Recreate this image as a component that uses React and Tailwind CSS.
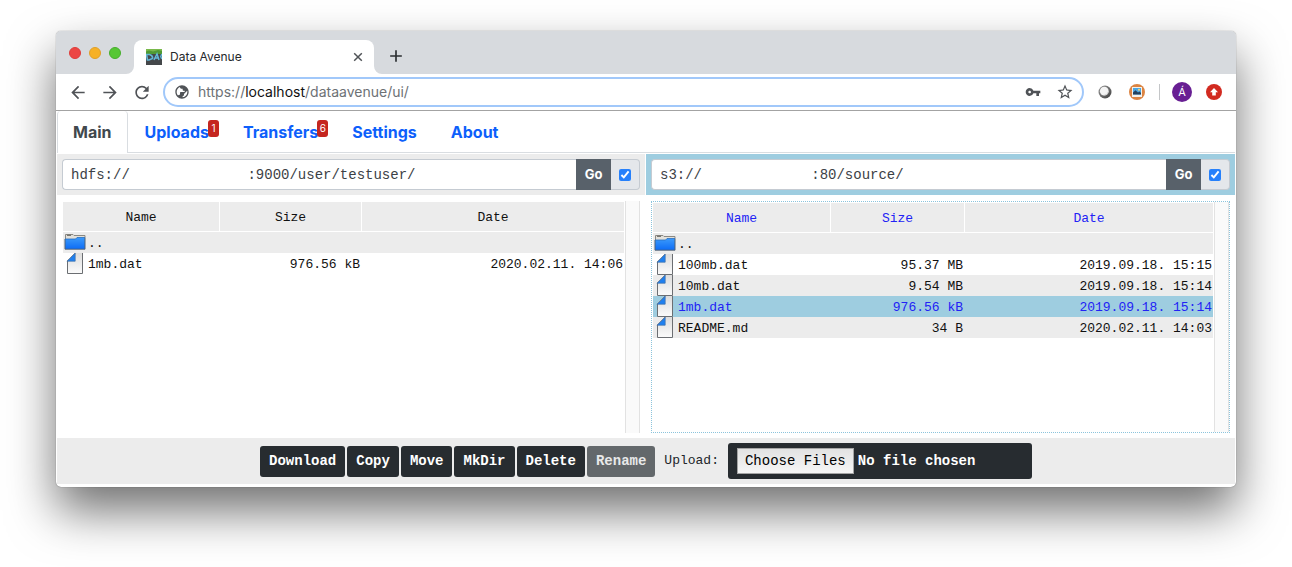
import React from "react";
import {
  MdAdd,
  MdArrowBack,
  MdArrowForward,
  MdPublic,
  MdRefresh,
  MdStarBorder,
  MdVpnKey,
} from "react-icons/md";

const NBSP = "\u00a0";

const leftFiles = [
  { name: "..", kind: "folder", size: "", date: "" },
  { name: "1mb.dat", kind: "file", size: "976.56 kB", date: "2020.02.11. 14:06" },
];

const rightFiles = [
  { name: "..", kind: "folder", size: "", date: "" },
  { name: "100mb.dat", kind: "file", size: "95.37 MB", date: "2019.09.18. 15:15" },
  { name: "10mb.dat", kind: "file", size: "9.54 MB", date: "2019.09.18. 15:14" },
  { name: "1mb.dat", kind: "file", size: "976.56 kB", date: "2019.09.18. 15:14", selected: true },
  { name: "README.md", kind: "file", size: "34 B", date: "2020.02.11. 14:03" },
];

function FolderIcon() {
  return (
    <svg width="23" height="21" viewBox="0 0 23 21" className="shrink-0" aria-hidden="true">
      <defs>
        <linearGradient id="folderFill" x1="0" y1="0" x2="0" y2="1">
          <stop offset="0" stopColor="#3b9afb" />
          <stop offset="1" stopColor="#0d6cf6" />
        </linearGradient>
      </defs>
      <path d="M2.500 2.500h7.500l1 1h11v5h-19.500z" fill="#e2e0da" />
      <path d="M2.500 7v-4.500h7.500l1 1h11v2" fill="none" stroke="#8b8983" />
      <path d="M4 3.300h4" stroke="#5d5c58" />
      <path d="M2 7h10.500l1.500-1.500h8v11.500h-20z" fill="url(#folderFill)" />
      <path d="M2 7v10.200h20v-11.700" fill="none" stroke="#4d6077" />
      <path d="M2 7h10.500l1.500-1.500h8" fill="none" stroke="#2a6fc0" strokeWidth="0.800" />
    </svg>
  );
}

function FileIcon() {
  return (
    <svg width="23" height="21" viewBox="0 0 23 21" className="shrink-0" aria-hidden="true">
      <defs>
        <linearGradient id="fileFill" x1="0" y1="0" x2="0" y2="1">
          <stop offset="0" stopColor="#dcdcdc" />
          <stop offset="1" stopColor="#fbfbfb" />
        </linearGradient>
      </defs>
      <path d="M12 0h7.500v20.500h-15.500v-13z" fill="url(#fileFill)" />
      <path d="M4.500 8v12.500h15v-20.500" fill="none" stroke="#6b6e72" />
      <path d="M4 8.200l8.200-8.200v8.200z" fill="#1f80f0" />
      <path d="M4 8.200l8.200-8.200" stroke="#4c6178" strokeWidth="0.800" />
      <path d="M12.200 0v8.200h-8.200" fill="none" stroke="#3f6ea8" strokeWidth="0.700" />
    </svg>
  );
}

function Favicon() {
  return (
    <svg width="16" height="16" viewBox="0 0 16 16" className="shrink-0" aria-hidden="true">
      <rect width="16" height="16" fill="#44474a" />
      <rect width="16" height="5" fill="#4f9a33" />
      <path d="M0 2.500l3-1 4 1 5-1.500 4 1v-2h-16z" fill="#79b94b" />
      <path d="M0.500 5.500h3q3.500 1 3 4l-3.500 1.500h-1.500z" fill="none" stroke="#63b7d6" strokeWidth="1.600" />
      <path d="M8 11l3-6 2 6M9 9h4M15.800 5l-1 2.500 1 2.500" fill="none" stroke="#63b7d6" strokeWidth="1.500" />
    </svg>
  );
}

function CloseIcon() {
  return (
    <svg width="16" height="16" viewBox="0 0 16 16" aria-hidden="true">
      <path d="M4.200 4.200l7.600 7.600M11.800 4.200l-7.600 7.600" stroke="currentColor" strokeWidth="1.500" />
    </svg>
  );
}

function SphereIcon() {
  return (
    <svg width="16" height="16" viewBox="0 0 16 16" aria-hidden="true">
      <defs>
        <linearGradient id="ringFill" x1="0" y1="0" x2="1" y2="1">
          <stop offset="0" stopColor="#9c9c9c" />
          <stop offset="1" stopColor="#3d3d3d" />
        </linearGradient>
      </defs>
      <circle cx="8" cy="8" r="6.500" fill="url(#ringFill)" />
      <circle cx="7.300" cy="7.200" r="4.400" fill="#f4f4f4" />
      <path d="M11.300 6.500a4.200 4.200 0 0 1-6 4.500q5 .5 6-4.500z" fill="#bdbdbd" />
    </svg>
  );
}

function PictureIcon() {
  return (
    <svg width="16" height="16" viewBox="0 0 16 16" aria-hidden="true">
      <circle cx="8" cy="8" r="8" fill="#dc8442" />
      <rect x="3" y="3" width="10" height="10" fill="#f4f1ea" />
      <rect x="4" y="4" width="8" height="6.500" fill="#4ba6e2" />
      <circle cx="10" cy="5.800" r="1" fill="#f7d978" />
      <path d="M4 10.500v-2l2.500-2.200 2.500 2.200 1.500-1 1.500 1.500v1.500z" fill="#23405c" />
    </svg>
  );
}

function UpdateIcon() {
  return (
    <svg width="16" height="16" viewBox="0 0 16 16" aria-hidden="true">
      <circle cx="8" cy="8" r="8" fill="#d22a20" />
      <path d="M8 4l4 4.200h-2.200v3.300h-3.600v-3.300h-2.200z" fill="#fff" />
    </svg>
  );
}

function TabCorner({ flip }) {
  return (
    <svg width="8" height="8" viewBox="0 0 8 8" className="shrink-0 self-end" aria-hidden="true">
      <path d={flip ? "M0 0v8h8a8 8 0 0 1-8-8z" : "M8 0v8h-8a8 8 0 0 0 8-8z"} fill="#fff" />
    </svg>
  );
}

function TabStrip() {
  return (
    <div className="flex h-[43px] items-end bg-[#d7dade]">
      <div className="flex gap-2 self-center pl-[13px] pr-[5px]">
        <span className="size-3 rounded-full border border-[#df3d3a] bg-[#ec4644]" />
        <span className="size-3 rounded-full border border-[#e0a028] bg-[#f6b127]" />
        <span className="size-3 rounded-full border border-[#46ae2c] bg-[#56c734]" />
      </div>
      <TabCorner />
      <div className="flex h-[34px] w-60 items-center gap-2 rounded-t-lg bg-white pl-3 pr-2">
        <Favicon />
        <span className="flex-1 text-xs text-[#25282b]">Data Avenue</span>
        <button type="button" aria-label="Close tab" className="flex size-4 items-center justify-center text-[#505357]">
          <CloseIcon />
        </button>
      </div>
      <TabCorner flip />
      <button type="button" aria-label="New tab" className="mb-2 ml-1 flex size-5 items-center justify-center text-[#2b2e31]">
        <MdAdd size={20} />
      </button>
    </div>
  );
}

function ToolButton({ label, children }) {
  return (
    <button type="button" aria-label={label} className="flex size-5 shrink-0 items-center justify-center text-[#505357]">
      {children}
    </button>
  );
}

function Toolbar() {
  return (
    <div className="flex h-[37px] items-center gap-3 border-b border-[#a3a3a3] bg-white pl-3 pr-3">
      <ToolButton label="Back"><MdArrowBack size={21} /></ToolButton>
      <ToolButton label="Forward"><MdArrowForward size={21} /></ToolButton>
      <ToolButton label="Reload"><MdRefresh size={21} /></ToolButton>
      <div className="-mx-px flex h-[30px] flex-1 items-center gap-2 rounded-full border-2 border-[#a1c8fa] pl-[9px] pr-[7px]">
        <MdPublic size={16} className="shrink-0 -scale-x-100 text-[#505357]" />
        <div className="flex-1 text-sm text-[#6d7175]">
          https://<span className="text-[#111]">localhost</span>/dataavenue/ui/
        </div>
        <div className="flex gap-3">
          <ToolButton label="Saved passwords"><MdVpnKey size={16} /></ToolButton>
          <ToolButton label="Bookmark"><MdStarBorder size={18} /></ToolButton>
        </div>
      </div>
      <ToolButton label="Session extension"><SphereIcon /></ToolButton>
      <ToolButton label="Picture extension"><PictureIcon /></ToolButton>
      <div className="flex items-center gap-3">
        <span className="h-4 w-px bg-[#c4c6c8]" />
        <button type="button" className="size-5 rounded-full bg-[#681f93] text-center text-[11px] leading-5 text-white">
          Á
        </button>
      </div>
      <ToolButton label="Update"><UpdateIcon /></ToolButton>
    </div>
  );
}

function Badge({ children }) {
  return (
    <span className="absolute -right-[10px] top-[9px] h-[17px] w-[11px] rounded-[3px] bg-[#c5261f] text-center text-[10px] leading-[17px] font-normal text-white">
      {children}
    </span>
  );
}

function NavTabs() {
  const link = "px-[17px]";
  const label = "relative flex h-full items-center";
  return (
    <nav className="flex h-[42px] border-b border-[#d9dde1] text-[16px] font-bold text-[#0d5ffb]">
      <a href="#main" className="-mb-px flex rounded-t-sm border border-t-0 border-b-0 border-[#d9dde1] bg-white px-[15px] pb-px text-[#41484d]">
        <span className={label}>Main</span>
      </a>
      <a href="#uploads" className={link}><span className={label}>Uploads<Badge>1</Badge></span></a>
      <a href="#transfers" className={link}><span className={label}>Transfers<Badge>6</Badge></span></a>
      <a href="#settings" className={link}><span className={label}>Settings</span></a>
      <a href="#about" className={link}><span className={label}>About</span></a>
    </nav>
  );
}

function AddressBar({ side, value, active }) {
  return (
    <div className={`flex p-[5px] ${active ? "bg-[#9ecde0]" : "bg-[#ececec]"}`}>
      <input
        type="text"
        aria-label={`${side} address`}
        defaultValue={value}
        className="h-[31px] min-w-0 flex-1 rounded-l border border-r-0 border-[#c5cbd2] bg-white px-2 font-['Liberation_Mono',monospace] text-sm text-[#3c4146] outline-none"
      />
      <button type="button" className="w-[35px] bg-[#58616a] text-[13px] font-bold text-white">
        Go
      </button>
      <label className="flex w-[29px] items-center justify-center rounded-r border border-l-0 border-[#c5cbd2] bg-[#e4e7eb]">
        <input type="checkbox" defaultChecked aria-label={`Select ${side} panel`} className="size-3 accent-[#2680fb]" />
      </label>
    </div>
  );
}

function FilePane({ files, active, columns }) {
  const head = "h-[30px] border-b border-white bg-[#ececec] p-0 pt-px text-center font-normal";
  const cell = "p-0 pt-[2px] pr-[2px] text-right";
  return (
    <div
      className={`m-[5px] mt-[6px] flex flex-1 ${
        active ? "border border-dotted border-[#8cc4dc]" : ""
      }`}
    >
      <div className="flex-1 pl-px pt-px">
        <table className="w-full table-fixed border-separate border-spacing-0 font-['Liberation_Mono',monospace] text-[13px] leading-[19px] text-[#111]">
          <colgroup>
            <col className={columns[0]} />
            <col className={columns[1]} />
            <col />
          </colgroup>
          <thead className={active ? "text-[#2222f5]" : ""}>
            <tr>
              <th className={`${head} border-r`}>Name</th>
              <th className={`${head} border-r`}>Size</th>
              <th className={head}>Date</th>
            </tr>
          </thead>
          <tbody>
            {files.map((file, i) => (
              <tr
                key={file.name}
                className={
                  file.selected ? "bg-[#9ecde0] text-[#2222f5]" : i % 2 === 0 ? "bg-[#ececec]" : "bg-white"
                }
              >
                <td className="p-0">
                  <div className="flex gap-[2px]">
                    {file.kind === "folder" ? <FolderIcon /> : <FileIcon />}
                    <span className="pt-[2px]">{file.name}</span>
                  </div>
                </td>
                <td className={cell}>{file.size}</td>
                <td className="p-0 pt-[2px] pr-px text-right">{file.date}</td>
              </tr>
            ))}
          </tbody>
        </table>
      </div>
      <div className="ml-px w-[15px] border-x border-[#e2e2e2] bg-[#fafafa]" />
    </div>
  );
}

function ActionBar() {
  const actions = ["Download", "Copy", "Move", "MkDir", "Delete", "Rename"];
  return (
    <div className="flex h-[46px] items-center justify-center bg-[#ececec] font-['Liberation_Mono',monospace]">
      <div className="flex gap-[2px]">
        {actions.map((name) => (
          <button
            key={name}
            type="button"
            disabled={name === "Rename"}
            className="h-[31px] rounded-[3px] bg-[#272c30] px-[9px] text-sm font-bold text-white disabled:bg-[#63686b] disabled:text-[#e8e9e9]"
          >
            {name}
          </button>
        ))}
      </div>
      <label htmlFor="upload" className="ml-[9px] mr-[9px] text-[13px] text-[#212529]">
        Upload:
      </label>
      <input
        id="upload"
        type="file"
        multiple
        className="h-9 w-[304px] rounded-[3px] bg-[#272c30] px-[9px] py-[5px] text-sm font-bold text-white file:h-[26px] file:border file:border-solid file:border-[#a5a5a5] file:bg-linear-to-b file:from-[#e2e2e2] file:to-[#f6f6f6] file:px-[7px] file:font-normal file:text-black"
      />
    </div>
  );
}

export default function App() {
  return (
    <div className="flex min-h-screen bg-white px-14 pt-[31px] pb-20 font-['Inter',sans-serif]">
      <div className="flex flex-1 flex-col overflow-hidden rounded-[5px] bg-white shadow-[0_0_1px_rgba(0,0,0,0.6),0_24px_48px_rgba(0,0,0,0.56)]">
        <TabStrip />
        <Toolbar />
        <main className="flex flex-1 flex-col px-px pb-[3px]">
          <NavTabs />
          <div className="mt-px grid flex-1 grid-cols-[588fr_589fr] gap-px">
            <section className="flex flex-col">
              <AddressBar side="left" value={`hdfs://${NBSP.repeat(14)}:9000/user/testuser/`} />
              <FilePane files={leftFiles} columns={["w-[157px]", "w-[142px]"]} />
            </section>
            <section className="flex flex-col">
              <AddressBar side="right" value={`s3://${NBSP.repeat(13)}:80/source/`} active />
              <FilePane files={rightFiles} columns={["w-[178px]", "w-[134px]"]} active />
            </section>
          </div>
          <ActionBar />
        </main>
      </div>
    </div>
  );
}
